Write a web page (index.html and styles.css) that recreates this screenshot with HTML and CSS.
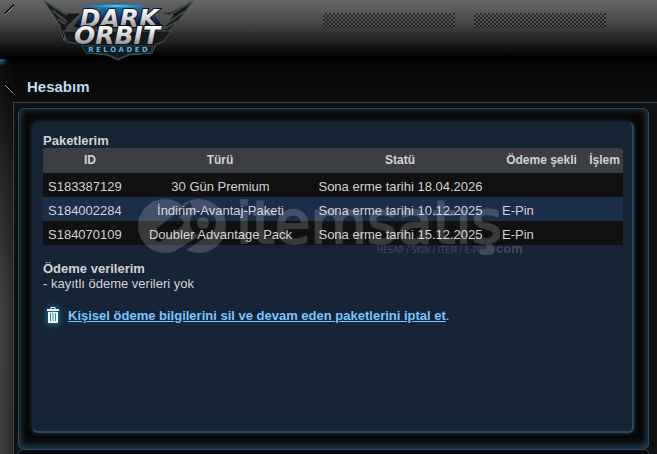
FILE: index.html
```html
<!DOCTYPE html>
<html lang="tr">
<head>
<meta charset="utf-8">
<title>Hesabım</title>
<link rel="stylesheet" href="styles.css">
</head>
<body>
<div class="header">
<svg class="scratch" width="16" height="16" viewBox="0 0 16 16"><path d="M5 14 14 5" stroke="#000" stroke-width="2"/><path d="M5 15 14 6" stroke="#aaa"/></svg>
<a class="logo" href="#" aria-label="Dark Orbit Reloaded">
<svg width="152" height="62" viewBox="0 0 152 62">
<defs>
<linearGradient id="metal" x1="0" y1="0" x2="0" y2="1">
<stop offset=".2" stop-color="#fff"/><stop offset=".55" stop-color="#ccc"/><stop offset=".8" stop-color="#8d8d94"/>
</linearGradient>
<linearGradient id="sky" x1="0" y1="0" x2="0" y2="1">
<stop offset="0" stop-color="#2785b8"/><stop offset=".5" stop-color="#173b76"/><stop offset="1" stop-color="#080b12"/>
</linearGradient>
<radialGradient id="flare">
<stop offset="0" stop-color="#dff"/><stop offset=".2" stop-color="#32b9de"/><stop offset="1" stop-color="#1741a5" stop-opacity="0"/>
</radialGradient>
</defs>
<path class="wing" d="M1 1 L23 13 L38 13 L24 27 L21 41 L16 24 Z M150 1 L128 12 L113 13 L130 15 L112 41 L121 36 L136 20Z"/>
<path class="wing" d="M20 31 L128 31 L120 42 L113 44 L109 53 L86 55 L75 60 L64 55 L44 53 L38 44 L24 42Z"/>
<path class="feather" d="M1 1 L24 15 M9 10 L24 22 M15 19 L22 24 M150 1 L125 16 M142 11 L123 24 M135 21 L121 29"/>
<path class="planet" d="M31 27 Q38 5 75 5 Q112 5 119 27Z"/>
<ellipse cx="74" cy="6" rx="44" ry="3" fill="url(#flare)"/>
<text class="word" x="76" y="27">DARK</text>
<text class="word" x="74" y="44">ORBIT</text>
<path class="badge" d="M39 46 L110 46 L107 53 L86 54 L75 59 L64 54 L43 53Z"/>
<text class="reloaded" x="75" y="52">R E L O A D E D</text>
</svg>
</a>
<div class="grilles">
<span class="grille"></span>
<span class="grille"></span>
</div>
</div>

<div class="page">
<div class="rail">
<svg width="13" height="40" viewBox="0 0 13 40"><path d="M5 25 13 33" stroke="#000" stroke-width="3"/><path d="M5 26 13 34" stroke="#aaa"/></svg>
</div>
<div class="main">
<h1>Hesabım</h1>
<div class="content">
<div class="frame">
<div class="panel">
<h2>Paketlerim</h2>
<div class="packages">
<table>
<colgroup><col class="c-id"><col class="c-type"><col class="c-status"><col class="c-pay"><col class="c-action"></colgroup>
<thead>
<tr><th>ID</th><th>Türü</th><th>Statü</th><th>Ödeme şekli</th><th>İşlem</th></tr>
</thead>
<tbody>
<tr><td>S183387129</td><td class="mid">30 Gün Premium</td><td class="mid">Sona erme tarihi 18.04.2026</td><td></td><td></td></tr>
<tr class="alt"><td>S184002284</td><td class="mid">İndirim-Avantaj-Paketi</td><td class="mid">Sona erme tarihi 10.12.2025</td><td>E-Pin</td><td></td></tr>
<tr><td>S184070109</td><td class="mid">Doubler Advantage Pack</td><td class="mid">Sona erme tarihi 15.12.2025</td><td>E-Pin</td><td></td></tr>
</tbody>
</table>
<svg class="watermark" width="386" height="64" viewBox="0 0 386 64">
<defs>
<mask id="rings">
<rect width="90" height="64" fill="#fff"/>
<path d="M18 35 L36 20 Q41 16 45 21 Q47 25 42 29 L22 43 Q15 43 18 35Z" fill="#000"/>
<circle cx="65" cy="24" r="13" fill="#000"/>
<path d="M53 5 L20 32 M70 34 L34 57" stroke="#000" stroke-width="5"/>
</mask>
</defs>
<g mask="url(#rings)">
<circle cx="27" cy="27" r="27"/><circle cx="61" cy="27" r="27"/>
</g>
<circle cx="65" cy="24" r="6"/>
<text class="brand" x="98" y="44">itemsatış</text>
<text class="tags" x="239" y="54">HESAP / SKIN / ITEM / E-PIN</text>
<circle cx="352" cy="51" r="5"/>
<text class="tld" x="358" y="54">com</text>
</svg>
</div>
<h2>Ödeme verilerim</h2>
<p>- kayıtlı ödeme verileri yok</p>
<p class="delete">
<svg class="trash" width="14" height="18" viewBox="0 0 14 18">
<path d="M5 3 V1.500 H9 V3" fill="none" stroke="#fff"/>
<path d="M1 3 H13 V5 H1Z M2 6 H12 V17 H2Z" fill="#fff"/>
<path d="M4.500 7 V15 M7 7 V15 M9.500 7 V15" stroke="#168bc2"/>
</svg>
<span><a href="#">Kişisel ödeme bilgilerini sil ve devam eden paketlerini iptal et</a>.</span>
</p>
</div>
</div>
<div class="frame next"></div>
</div>
</div>
</div>
</body>
</html>
```
FILE: styles.css
```css
body {
  margin: 0;
  min-height: 100vh;
  display: flex;
  flex-direction: column;
  background: #0b0b0b;
  color: #d2d2d2;
  font: 13px/15px "Liberation Sans", Arial, sans-serif;
}

h1, h2, p {
  margin: 0;
}

/* Header */

.header {
  display: flex;
  flex: none;
  height: 59px;
  background: linear-gradient(#666 0%, #4b4b4b 35%, #000 97%);
}

.scratch {
  flex: none;
  margin-right: 27px;
}

.logo {
  flex: none;
  height: 59px;
  z-index: 1;
}

.wing {
  fill: #15191b;
  stroke: #4c5356;
}

.feather {
  fill: none;
  stroke: #42494d;
  stroke-width: 2;
}

.planet {
  fill: url(#sky);
}

.badge {
  fill: #10191e;
  stroke: #37464e;
}

.word {
  font: italic bold 25px "DejaVu Sans", sans-serif;
  text-anchor: middle;
  fill: url(#metal);
  stroke: #11141c;
  stroke-width: 2px;
  paint-order: stroke;
}

.reloaded {
  font: bold 7px "DejaVu Sans", sans-serif;
  text-anchor: middle;
  fill: #4db9e2;
}

.grilles {
  display: flex;
  gap: 19px;
  margin: 13px 0 0 128px;
}

.grille {
  width: 132px;
  height: 15px;
  background: repeating-conic-gradient(rgba(0, 0, 0, .5) 0 25%, rgba(110, 110, 110, .25) 0 50%) 0 0 / 4px 4px;
}

/* Page */

.page {
  display: flex;
  flex: 1;
}

.rail {
  flex: none;
  width: 13px;
  background:
    radial-gradient(circle at 0 0, #1c7797 0, transparent 8px),
    linear-gradient(90deg, transparent, rgba(0, 0, 0, .35)),
    linear-gradient(#0a0a0a 0, #2a2a2a 120px, #444 250px, #404040);
}

.main {
  flex: 1;
  min-width: 0;
  background: linear-gradient(#040404, #0d0d0d 43px);
}

h1 {
  padding: 18px 14px 5px;
  font-size: 15px;
  line-height: 20px;
  color: #b9dcf2;
}

.content {
  padding: 5px 8px 0 4px;
  border: solid #2b485d;
  border-width: 1px 0 0 1px;
  background: #111;
}

.frame {
  padding: 13px 14px 16px 13px;
  border: 1px solid #2b485d;
  border-radius: 6px;
  background: #080808;
  box-shadow: inset 0 0 7px #223e52, inset 0 -4px 8px #1c3242;
}

.next {
  margin-top: -1px;
  padding: 2px;
  border-bottom: 0;
  border-radius: 6px 6px 0 0;
  box-shadow: none;
}

.panel {
  box-sizing: border-box;
  min-height: 311px;
  padding: 11px 9px 10px 11px;
  border: solid #294760;
  border-width: 0 2px 2px 0;
  border-radius: 6px;
  background: #152536;
  box-shadow: 0 0 4px #223a4b;
}

h2 {
  font-size: 13px;
  line-height: 15px;
}

/* Packages */

.packages {
  position: relative;
  margin-bottom: 16px;
}

table {
  width: 100%;
  table-layout: fixed;
  border-collapse: collapse;
}

.c-id { width: 94px; }
.c-type { width: 166px; }
.c-status { width: 194px; }
.c-pay { width: 89px; }

th {
  height: 25px;
  padding: 0;
  background: #3b3e44;
  font-size: 12px;
}

th:first-child {
  border-top-left-radius: 4px;
}

th:last-child {
  border-top-right-radius: 4px;
}

td {
  height: 22px;
  padding: 2px 4px 0 5px;
  background: #111;
  white-space: nowrap;
}

.alt td {
  background: #1b2e49;
}

.mid {
  text-align: center;
}

.watermark {
  position: absolute;
  top: 51px;
  left: 95px;
  opacity: .17;
  fill: #fff;
  pointer-events: none;
}

.brand {
  font: 58px "DejaVu Sans", sans-serif;
  stroke: #fff;
  stroke-width: 2px;
  stroke-linejoin: round;
}

.tags {
  font: 8px "DejaVu Sans", sans-serif;
}

.tld {
  font: bold 13px "Liberation Sans", sans-serif;
}

/* Payment data */

.delete {
  display: flex;
  align-items: center;
  gap: 8px;
  margin-top: 15px;
  padding-left: 3px;
}

.trash {
  flex: none;
  filter: drop-shadow(0 0 3px #139ce0);
}

.delete a {
  color: #79c6ff;
  font-weight: bold;
}
```
